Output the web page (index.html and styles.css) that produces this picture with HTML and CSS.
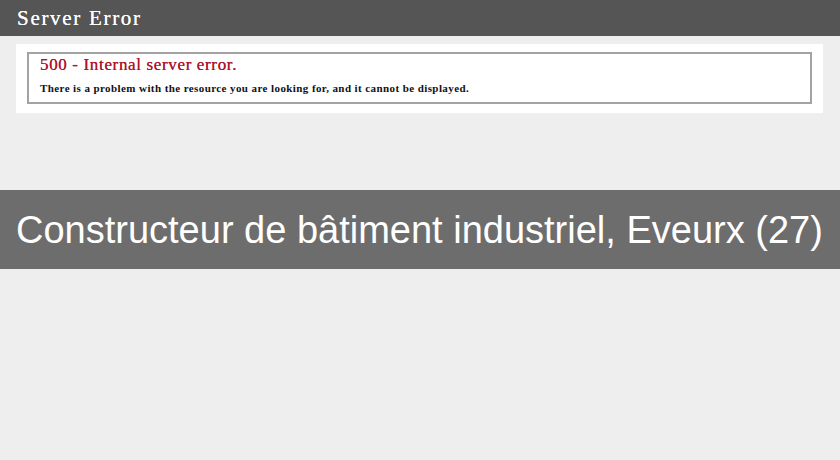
FILE: index.html
```html
<!DOCTYPE html>
<html lang="fr">
<head>
  <meta charset="UTF-8" />
  <title>Server Error</title>
  <link rel="stylesheet" href="styles.css">
</head>
<body>

  <!-- Error header -->
  <div id="header"><h1>Server Error</h1></div>

  <!-- Error content -->
  <div id="content">
    <div class="content-container">
      <h2>500 - Internal server error.</h2>
      <h3>There is a problem with the resource you are looking for, and it cannot be displayed.</h3>
    </div>
  </div>

  <!-- Title band -->
  <div id="title-band">Constructeur de bâtiment industriel, Eveurx (27)</div>

</body>
</html>
```

FILE: styles.css
```css
/* Basic Reset */
* {
  margin: 0;
  padding: 0;
  box-sizing: border-box;
}

body {
  background: #eeeeee;
  font-family: "Liberation Serif", serif;
  width: 840px;
  height: 460px;
  overflow: hidden;
}

/* Header */
#header {
  height: 36px;
  background: #555555;
  padding-left: 17px;
}

#header h1 {
  color: #fff;
  font-size: 21px;
  font-weight: normal;
  line-height: 36px;
  letter-spacing: 1.7px;
  text-shadow: 0 0 0.4px #fff;
}

/* Content panel */
#content {
  margin: 8px 17px 0 16px;
  background: #fff;
  padding: 8px 11px 9px;
}

.content-container {
  height: 52px;
  border: 2px solid #a3a3a3;
  padding: 2px 0 0 11px;
}

.content-container h2 {
  color: #b0162a;
  font-size: 17px;
  font-weight: normal;
  line-height: 18px;
  letter-spacing: 0.65px;
  text-shadow: 0 0 0.3px #b0162a;
}

.content-container h3 {
  color: #111;
  font-size: 11px;
  font-weight: bold;
  margin-top: 8px;
  letter-spacing: 0.41px;
}

/* Title band */
#title-band {
  margin-top: 77px;
  height: 79px;
  background: #6d6d6d;
  color: #fff;
  font-family: "Liberation Sans", Arial, sans-serif;
  font-size: 38px;
  line-height: 80px;
  padding-left: 16px;
  white-space: nowrap;
}
```
